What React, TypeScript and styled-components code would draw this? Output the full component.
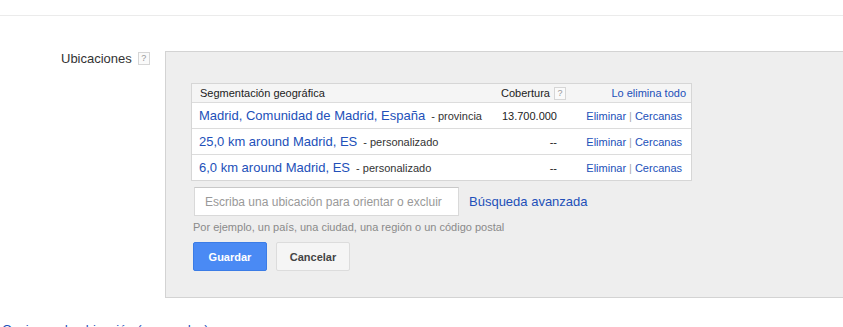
import React from 'react';
import styled, { createGlobalStyle } from 'styled-components';

const GlobalStyle = createGlobalStyle`
  body {
    margin: 0;
    background: #fff;
    font-family: "Liberation Sans", Arial, sans-serif;
    color: #333;
    overflow: hidden;
  }
`;

const Page = styled.div`
  width: 843px;
  height: 327px;
  overflow: hidden;
`;

const TopRule = styled.div`
  height: 15px;
  border-bottom: 1px solid #ebebeb;
`;

const Section = styled.div`
  display: flex;
  margin-top: 35px;
`;

const LabelCol = styled.div`
  width: 104px;
  padding: 0 0 0 61px;
  display: flex;
  align-items: flex-start;
  font-size: 13px;
  color: #333;
`;

const HelpBox = styled.span<{ $offset?: number }>`
  display: inline-flex;
  align-items: center;
  justify-content: center;
  width: 10px;
  height: 11px;
  margin-left: ${p => p.$offset ?? 6}px;
  margin-top: 1px;
  border: 1px solid #d6d6d6;
  background: #fafafa;
  color: #999;
  font-size: 9px;
  line-height: 1;
`;

const Panel = styled.div`
  flex: 1;
  height: 214px;
  background: #eeeeee;
  border: 1px solid #d3d3d3;
  border-right: none;
  padding: 31px 0 0 25px;
`;

const Table = styled.div`
  width: 499px;
  border: 1px solid #d6d6d6;
  background: #fff;
`;

const Row = styled.div<{ $head?: boolean }>`
  display: grid;
  grid-template-columns: 302px 76px 1fr;
  align-items: center;
  height: ${p => (p.$head ? 18 : 25)}px;
  background: ${p => (p.$head ? '#f5f5f5' : '#fff')};
  border-top: ${p => (p.$head ? 'none' : '1px solid #dcdcdc')};
  font-size: 11px;
  color: #222;
`;

const Cell = styled.div<{ $align?: 'left' | 'right'; $pl?: number; $pr?: number }>`
  display: flex;
  align-items: center;
  justify-content: ${p => (p.$align === 'right' ? 'flex-end' : 'flex-start')};
  padding-left: ${p => p.$pl ?? 0}px;
  padding-right: ${p => p.$pr ?? 0}px;
  white-space: nowrap;
`;

const Link = styled.a<{ $size?: number }>`
  color: #2250b9;
  text-decoration: none;
  font-size: ${p => p.$size ?? 11}px;
`;

const Kind = styled.span`
  margin-left: 6px;
  font-size: 11px;
  color: #333;
`;

const Sep = styled.span`
  color: #aaa;
  margin: 0 3px;
`;

const InputRow = styled.div`
  display: flex;
  align-items: center;
  margin: 6px 0 0 3px;
`;

const Input = styled.input`
  box-sizing: border-box;
  width: 265px;
  height: 29px;
  padding: 0 10px;
  border: 1px solid #d9d9d9;
  border-top-color: #c8c8c8;
  font-family: inherit;
  font-size: 12px;
  color: #333;
  outline: none;
  &::placeholder {
    color: #999;
  }
`;

const AdvancedLink = styled(Link)`
  margin-left: 10px;
`;

const Hint = styled.div`
  margin: 5px 0 0 2px;
  font-size: 11px;
  color: #8a8a8a;
`;

const Buttons = styled.div`
  display: flex;
  gap: 9px;
  margin: 9px 0 0 2px;
`;

const Button = styled.button<{ $primary?: boolean }>`
  box-sizing: border-box;
  width: 74px;
  height: 29px;
  border-radius: 2px;
  border: 1px solid ${p => (p.$primary ? '#3b7ce6' : '#dcdcdc')};
  background: ${p => (p.$primary ? '#4a8af4' : '#f5f5f5')};
  color: ${p => (p.$primary ? '#fff' : '#444')};
  font-family: inherit;
  font-size: 11px;
  font-weight: bold;
  padding: 0;
`;

const Footer = styled.div`
  margin-top: 24px;
  padding-left: 2px;
  font-size: 13px;
  white-space: nowrap;
`;

const rows = [
  { place: 'Madrid, Comunidad de Madrid, España', kind: 'provincia', reach: '13.700.000' },
  { place: '25,0 km around Madrid, ES', kind: 'personalizado', reach: '--' },
  { place: '6,0 km around Madrid, ES', kind: 'personalizado', reach: '--' },
];

export default function App() {
  return (
    <Page>
      <GlobalStyle />
      <TopRule />
      <Section>
        <LabelCol>
          Ubicaciones
          <HelpBox>?</HelpBox>
        </LabelCol>
        <Panel>
          <Table>
            <Row $head>
              <Cell $pl={8}>Segmentación geográfica</Cell>
              <Cell $pl={7}>
                Cobertura
                <HelpBox $offset={4}>?</HelpBox>
              </Cell>
              <Cell $align="right" $pr={5}>
                <Link href="#">Lo elimina todo</Link>
              </Cell>
            </Row>
            {rows.map(r => (
              <Row key={r.place}>
                <Cell $pl={7}>
                  <Link href="#" $size={13}>{r.place}</Link>
                  <Kind>- {r.kind}</Kind>
                </Cell>
                <Cell $align="right" $pr={13}>{r.reach}</Cell>
                <Cell $align="right" $pr={9}>
                  <Link href="#">Eliminar</Link>
                  <Sep>|</Sep>
                  <Link href="#">Cercanas</Link>
                </Cell>
              </Row>
            ))}
          </Table>
          <InputRow>
            <Input placeholder="Escriba una ubicación para orientar o excluir" />
            <AdvancedLink href="#" $size={13}>Búsqueda avanzada</AdvancedLink>
          </InputRow>
          <Hint>Por ejemplo, un país, una ciudad, una región o un código postal</Hint>
          <Buttons>
            <Button $primary>Guardar</Button>
            <Button>Cancelar</Button>
          </Buttons>
        </Panel>
      </Section>
      <Footer>
        <Link href="#" $size={13}>Opciones de ubicación (avanzadas)</Link>
      </Footer>
    </Page>
  );
}
